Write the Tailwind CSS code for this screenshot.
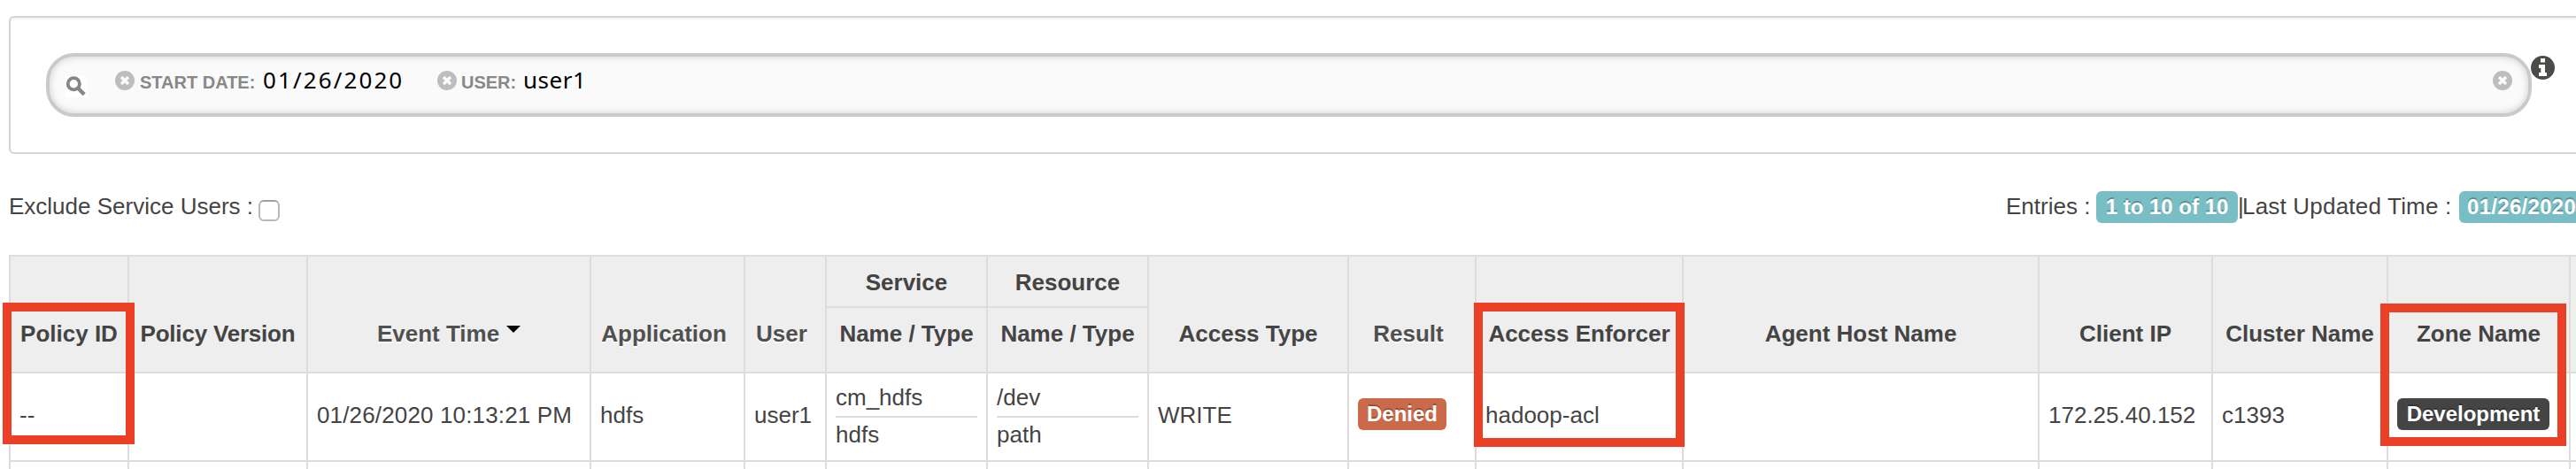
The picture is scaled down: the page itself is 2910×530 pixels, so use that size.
<!DOCTYPE html>
<html lang="en">
<head>
<meta charset="utf-8">
<title>Audit</title>
<script src="https://cdn.jsdelivr.net/npm/@tailwindcss/browser@4"></script>
</head>
<body class="bg-white">
<svg class="hidden">
  <symbol id="remove" viewBox="0 0 22 22"><circle cx="11" cy="11" r="11" fill="#bdbdbd"/><path d="M7 7l8 8M15 7l-8 8" stroke="#fafafa" stroke-width="3.4" stroke-linecap="butt"/></symbol>
</svg>
<div class="relative h-[530px] w-[2910px] overflow-hidden pl-[10px] pt-[18px] font-['Liberation_Sans',Arial,sans-serif] text-[26px] leading-[36px] text-[#444]">

  <section class="flex h-[156px] w-[2940px] items-start rounded-[6px] border-2 border-[#d4d4d4] pl-[40px] pt-[40px] shadow-[inset_0_2px_2px_rgba(0,0,0,0.05)]">
    <div class="flex h-[72px] w-[2808px] shrink-0 items-start rounded-[32px] border-4 border-[#cacaca] bg-[#fafafa] shadow-[inset_0_0_8px_rgba(0,0,0,0.18)]">
      <svg class="ml-[18px] mt-[22px] size-[24px] shrink-0 bg-white" viewBox="0 0 24 24" fill="none" stroke="#868686"><circle cx="9.3" cy="8.8" r="6.6" stroke-width="3.8"/><path d="M14 13.5l7.2 7.2" stroke-width="4.4"/></svg>
      <div class="ml-[32px] flex h-[42px] w-[364px] items-start">
        <svg class="mt-[16px] size-[22px] shrink-0"><use href="#remove"/></svg>
        <span class="ml-[6px] mt-[11px] w-[139px] whitespace-nowrap text-[20px] font-bold leading-[36px] text-[#888]">START DATE:</span>
        <span class="mt-[8px] whitespace-nowrap font-['Noto_Sans',sans-serif] tracking-[2.1px] text-black">01/26/2020</span>
      </div>
      <div class="flex h-[42px] items-start">
        <svg class="mt-[16px] size-[22px] shrink-0"><use href="#remove"/></svg>
        <span class="ml-[5px] mt-[11px] w-[70px] whitespace-nowrap text-[20px] font-bold leading-[36px] text-[#888]">USER:</span>
        <span class="mt-[8px] font-['Noto_Sans',sans-serif] tracking-[0.5px] text-black">user1</span>
      </div>
      <svg class="ml-auto mr-[18px] mt-[16px] size-[22px] shrink-0"><use href="#remove"/></svg>
    </div>
    <svg class="-ml-px mt-[3px] size-[27px] shrink-0" viewBox="0 0 27 27"><circle cx="13.5" cy="13.5" r="13.5" fill="#4b4b48"/><path d="M11 3h5v4.5h-5zM9 10h7v9h2v4H9v-4h2.3v-5H9z" fill="#fff"/></svg>
  </section>

  <div class="mt-[41px] flex h-[38px] w-[2900px] items-start whitespace-nowrap">
    <span class="w-[282px] shrink-0">Exclude Service Users :</span>
    <span class="mt-[11px] h-[24px] w-[24px] shrink-0 rounded-[6px] border-2 border-[#b8b8b8] border-t-[#a0a0a0] bg-white"></span>
    <span class="ml-[1950px] w-[102px] shrink-0">Entries :</span>
    <span class="mt-px w-[160px] shrink-0 rounded-[6px] bg-[#7abec5] text-center text-[24px] font-bold text-white [text-shadow:0_-2px_0_rgba(0,0,0,0.25)]">1 to 10 of 10</span>
    <span class="w-[5px] shrink-0">|</span>
    <span class="w-[245px] shrink-0 tracking-[0.2px]">Last Updated Time :</span>
    <span class="mt-px w-[300px] shrink-0 rounded-[6px] bg-[#7abec5] px-[9px] text-[24px] font-bold tracking-[0.3px] text-white [text-shadow:0_-2px_0_rgba(0,0,0,0.25)]">01/26/2020</span>
  </div>

  <table class="mt-[35px] w-[3012px] table-fixed border-separate border-spacing-0 whitespace-nowrap border-t-2 border-[#ddd] [&_td]:border-b-2 [&_td]:border-l-2 [&_td]:border-[#ddd] [&_td]:px-[10px] [&_td]:pt-0 [&_td]:pb-[4px] [&_th]:border-b-2 [&_th]:border-l-2 [&_th]:border-[#ddd] [&_th]:bg-[#eee] [&_th]:p-0">
    <colgroup>
      <col class="w-[134px]"><col class="w-[202px]"><col class="w-[320px]"><col class="w-[174px]"><col class="w-[92px]"><col class="w-[182px]"><col class="w-[182px]"><col class="w-[226px]"><col class="w-[144px]"><col class="w-[234px]"><col class="w-[402px]"><col class="w-[196px]"><col class="w-[198px]"><col class="w-[206px]"><col class="w-[120px]">
    </colgroup>
    <thead class="align-bottom">
      <tr class="h-[58px]">
        <th rowspan="2"><div class="pb-[25px]">Policy ID</div></th>
        <th rowspan="2"><div class="pb-[25px] tracking-[-0.2px]">Policy Version</div></th>
        <th rowspan="2"><div class="flex items-start justify-center gap-[8px] pb-[25px] text-[#505050] [text-shadow:0_2px_0_#fff]">Event Time<svg class="mt-[9px] h-[8px] w-[16px]" viewBox="0 0 16 8"><path d="M0 0h16L8 8z"/></svg></div></th>
        <th rowspan="2"><div class="pb-[25px] pr-[8px] text-[#505050] [text-shadow:0_2px_0_#fff]">Application</div></th>
        <th rowspan="2"><div class="pb-[25px] pr-[8px] text-[#505050] [text-shadow:0_2px_0_#fff]">User</div></th>
        <th><div class="pb-[9px]">Service</div></th>
        <th><div class="pb-[9px]">Resource</div></th>
        <th rowspan="2"><div class="pb-[25px]">Access Type</div></th>
        <th rowspan="2"><div class="pb-[25px] pr-[8px] text-[#505050] [text-shadow:0_2px_0_#fff]">Result</div></th>
        <th rowspan="2"><div class="pb-[25px]">Access Enforcer</div></th>
        <th rowspan="2"><div class="pb-[25px]">Agent Host Name</div></th>
        <th rowspan="2"><div class="pb-[25px]">Client IP</div></th>
        <th rowspan="2"><div class="pb-[25px]">Cluster Name</div></th>
        <th rowspan="2"><div class="pb-[25px]">Zone Name</div></th>
        <th rowspan="2"></th>
      </tr>
      <tr class="h-[74px]">
        <th><div class="pb-[25px]">Name / Type</div></th>
        <th><div class="pb-[25px]">Name / Type</div></th>
      </tr>
    </thead>
    <tbody>
      <tr class="h-[100px]">
        <td>--</td>
        <td></td>
        <td class="tracking-[0.15px]">01/26/2020 10:13:21 PM</td>
        <td>hdfs</td>
        <td>user1</td>
        <td><div class="mt-[3px] h-[41px] w-[160px] border-b-2 border-[#ddd]">cm_hdfs</div><div class="h-[38px] pt-px">hdfs</div></td>
        <td><div class="mt-[3px] h-[41px] w-[160px] border-b-2 border-[#ddd]">/dev</div><div class="h-[38px] pt-px">path</div></td>
        <td>WRITE</td>
        <td><div class="mb-[2px] h-[36px] w-[100px] rounded-[6px] bg-[#cb6a4b] text-center text-[24px] font-bold leading-[35px] text-white [text-shadow:0_-2px_0_rgba(0,0,0,0.25)]">Denied</div></td>
        <td>hadoop-acl</td>
        <td></td>
        <td>172.25.40.152</td>
        <td>c1393</td>
        <td><div class="mb-[2px] h-[36px] w-[172px] rounded-[6px] bg-[#444] text-center text-[24px] font-bold leading-[35px] text-white [text-shadow:0_-2px_0_rgba(0,0,0,0.25)]">Development</div></td>
        <td></td>
      </tr>
      <tr class="h-[40px]"><td></td><td></td><td></td><td></td><td></td><td></td><td></td><td></td><td></td><td></td><td></td><td></td><td></td><td></td><td></td></tr>
    </tbody>
  </table>

  <!-- Highlight frames over the columns of interest -->
  <div class="absolute left-[3px] top-[342px] h-[160px] w-[149px] border-[10px] border-[#eb4026]"></div>
  <div class="absolute left-[1665px] top-[342px] h-[163px] w-[238px] border-[10px] border-[#eb4026]"></div>
  <div class="absolute left-[2689px] top-[343px] h-[161px] w-[210px] border-[10px] border-[#eb4026]"></div>
</div>
</body>
</html>
